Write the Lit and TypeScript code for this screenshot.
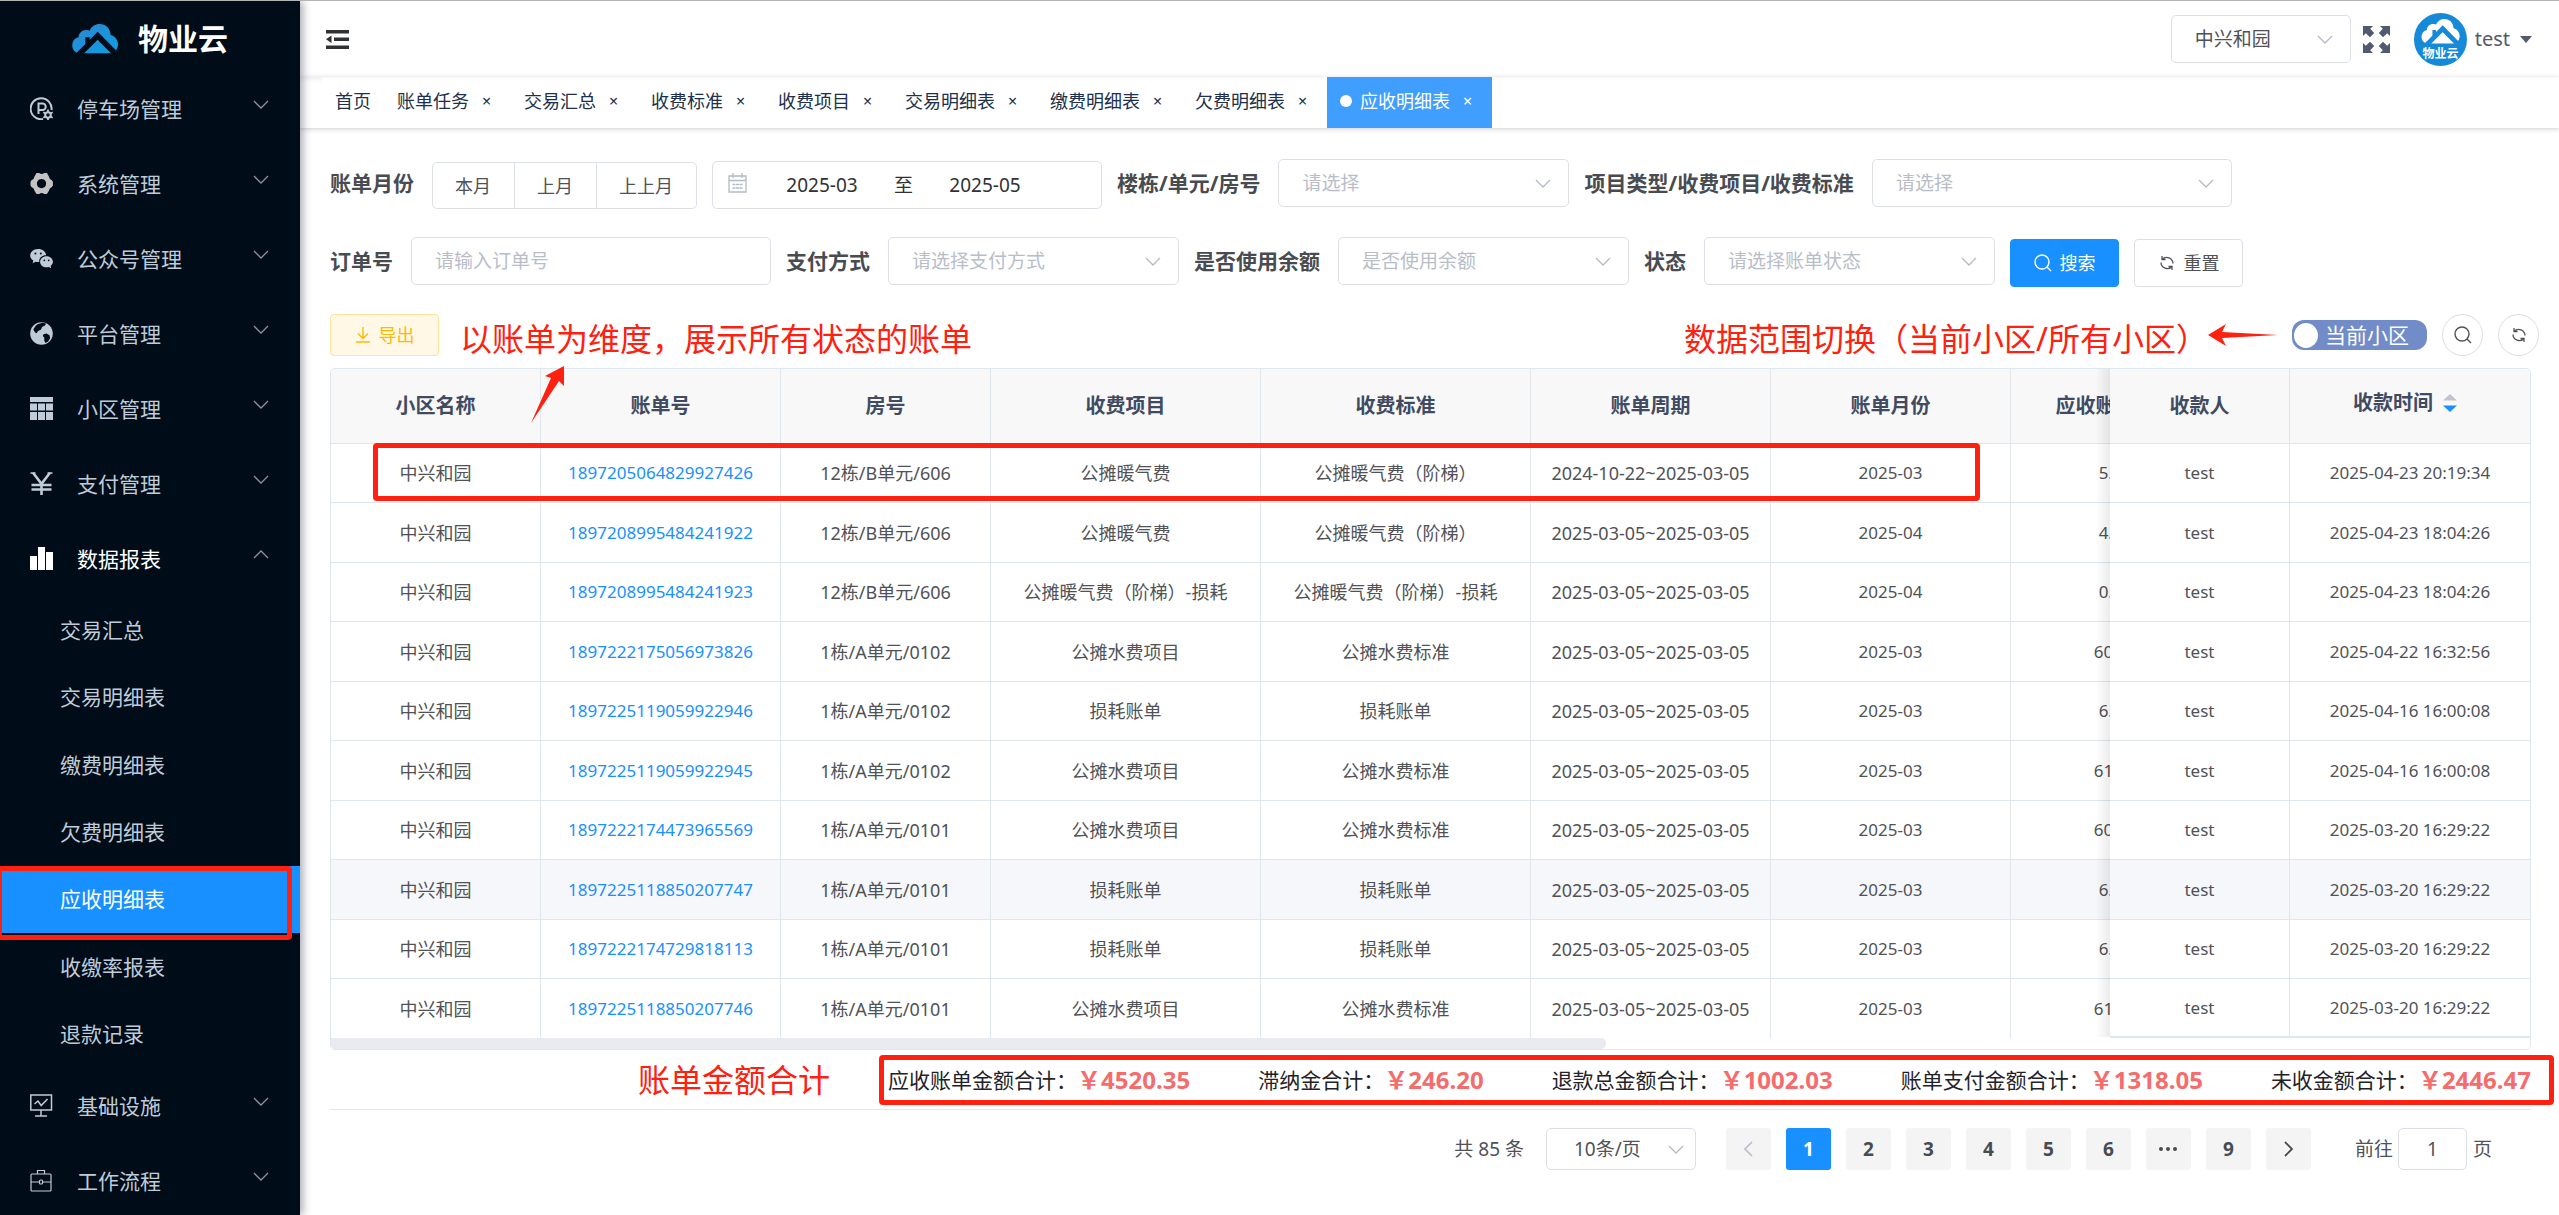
import { LitElement, html, css, svg, nothing } from "lit";
import { customElement } from "lit/decorators.js";
import { classMap } from "lit/directives/class-map.js";

const chevron = (cls: string) => html`<svg class=${cls} viewBox="0 0 16 9" width="16" height="9" aria-hidden="true"><path d="M1 1l7 7 7-7" fill="none" stroke="currentColor" stroke-width="1.3"/></svg>`;

const searchIcon = html`<svg viewBox="0 0 18 18" width="18" height="18" aria-hidden="true"><circle cx="8" cy="8" r="7" fill="none" stroke="currentColor" stroke-width="1.4"/><path d="M13 13l4 4" stroke="currentColor" stroke-width="1.4"/></svg>`;

const refreshIcon = html`<svg viewBox="0 0 18 18" width="18" height="18" aria-hidden="true"><g fill="none" stroke="currentColor" stroke-width="1.3"><path d="M4 2v3.500h3.500M4.200 5.300a6.300 6.300 0 0 1 10.800 4.200"/><path d="M14 16v-3.500h-3.500M13.800 12.700a6.300 6.300 0 0 1-10.800-4.200"/></g></svg>`;

const cloudShape = (fill: string, gap: string) => svg`
  <path fill=${fill} d="M18 88C4 82 0 72 1 62 2 49 10 42 20 40 19 27 31 17 44 18 48 18 51 19 53 20 58 7 70 0 83 0c19 0 32 14 33 33 13 3 22 15 22 28 0 13-8 23-20 27z"/>
  <path fill="none" stroke=${gap} stroke-width="17" d="M14 98L77 35l62 63"/>
  <path fill=${gap} d="M40 40h13v16l-13 14z"/>`;

const icons: Record<string, unknown> = {
  parking: svg`<g fill="none" stroke="currentColor" stroke-width="2"><path d="M13 22A10.500 10.500 0 1 1 21.500 13"/><path d="M8.500 17V6.500h4a3.200 3.200 0 0 1 0 6.500h-4"/><circle cx="18" cy="18" r="2.800"/></g><path d="M18 12.500v3M18 20.500v3M13.300 15.200l2.600 1.500M20.100 19.300l2.600 1.500M13.300 20.800l2.600-1.500M20.100 16.700l2.600-1.500" stroke="currentColor" stroke-width="1.800"/>`,
  gear: svg`<path fill="#c3c3c3" fill-rule="evenodd" d="M6.500 1h2.700q2.500 2 5 0h2.700l2 3.500q.3 2.700 3 3.700l1 1.500v3.800l-1 1.500q-2.700 1-3 3.700l-2 3.300h-2.700q-2.500-2-5 0H6.500l-2-3.300q-.3-2.700-3-3.700l-1-1.500V9.700l1-1.500q2.700-1 3-3.700zM11.500 7a4.600 4.600 0 1 0 .01 0z"/>`,
  wechat: svg`<path fill="currentColor" d="M8 2c4.600 0 7.800 2.700 8.200 6.200C12 8 8.700 11 9.300 15c-1.300.2-2.600 0-3.800-.3L2.600 16.300l.7-2.700C1.300 12.400.2 10.600.2 8.600.2 4.900 3.600 2 8 2z"/><path fill="currentColor" d="M16.500 9.300c3.700 0 6.400 2.500 6.400 5.500 0 1.700-.9 3.200-2.300 4.200l.5 2.200-2.300-1.300c-4.500 1.200-8.700-1.300-8.700-5 0-3.100 2.800-5.600 6.400-5.600z"/><g fill="#000c17"><circle cx="5.400" cy="6.500" r="1"/><circle cx="10.800" cy="6.500" r="1"/><circle cx="14.300" cy="13.300" r=".9"/><circle cx="18.700" cy="13.300" r=".9"/></g>`,
  globe: svg`<circle cx="11.500" cy="11.500" r="11.300" fill="currentColor"/><path fill="#000c17" d="M7.500 2.200l5-1.400 3.500.7-1 2-2.700 1.300-1.500 3L8 9 6.800 11.300 5 10.500 3.300 7.500 5.500 4zM13.500 12.300l3-.8 3 1.700.7 2.800-2 3.500-2.700 1.500-1.300-2.500.2-2.700-1.600-1.800z"/>`,
  grid: svg`<path fill="currentColor" d="M0 0h23v5H0zM0 6.500h7v7H0zM8 6.500h7v7H8zM16 6.500h7v7h-7zM0 15h7v8H0zM8 15h7v8H8zM16 15h7v8h-7z"/>`,
  yen: svg`<path fill="none" stroke="currentColor" stroke-width="2.600" d="M3 .8l8.500 11L20 .8M11.500 11.500V23M1.500 13h20M1.500 17.500h20"/><path stroke="currentColor" stroke-width="1.500" d="M.5 1h5M17.500 1h5"/>`,
  bars: svg`<path fill="currentColor" d="M0 9h7v14H0zM8 0h7v23H8zM16 5h7v18h-7z"/>`,
  board: svg`<path fill="none" stroke="currentColor" stroke-width="1.500" d="M.8 1h20.700v15H.8zM11 16v6M5 22h12M4.500 10l3.500-3 3.200 4.500L17.500 5"/>`,
  briefcase: svg`<g fill="none" stroke="currentColor" stroke-width="1.200"><rect x="1" y="5" width="20" height="17" rx="1"/><path d="M7.500 5V1.500h7V5M1 13h8.500M12.500 13H21"/><rect x="9.500" y="11" width="3" height="4" rx="1"/></g>`,
};

interface MenuItem { label: string; icon: string; children?: string[] }
const menu: MenuItem[] = [
  { label: "停车场管理", icon: "parking" },
  { label: "系统管理", icon: "gear" },
  { label: "公众号管理", icon: "wechat" },
  { label: "平台管理", icon: "globe" },
  { label: "小区管理", icon: "grid" },
  { label: "支付管理", icon: "yen" },
  { label: "数据报表", icon: "bars", children: ["交易汇总", "交易明细表", "缴费明细表", "欠费明细表", "应收明细表", "收缴率报表", "退款记录"] },
  { label: "基础设施", icon: "board" },
  { label: "工作流程", icon: "briefcase" },
];
const currentPage = "应收明细表";
const tabs = ["首页", "账单任务", "交易汇总", "收费标准", "收费项目", "交易明细表", "缴费明细表", "欠费明细表", "应收明细表"];

const columns: [string, string][] = [
  ["小区名称", "w210"], ["账单号", "w240"], ["房号", "w210"], ["收费项目", "w270"], ["收费标准", "w270"],
  ["账单周期", "w240"], ["账单月份", "w240"], ["应收账单金额", "w210"],
];
const usual = "2025-03-05~2025-03-05";
const rows: string[][] = [
  ["1897205064829927426", "12栋/B单元/606", "公摊暖气费", "公摊暖气费（阶梯）", "2024-10-22~2025-03-05", "2025-03", "5.00", "2025-04-23 20:19:34"],
  ["1897208995484241922", "12栋/B单元/606", "公摊暖气费", "公摊暖气费（阶梯）", usual, "2025-04", "4.00", "2025-04-23 18:04:26"],
  ["1897208995484241923", "12栋/B单元/606", "公摊暖气费（阶梯）-损耗", "公摊暖气费（阶梯）-损耗", usual, "2025-04", "0.00", "2025-04-23 18:04:26"],
  ["1897222175056973826", "1栋/A单元/0102", "公摊水费项目", "公摊水费标准", usual, "2025-03", "60.00", "2025-04-22 16:32:56"],
  ["1897225119059922946", "1栋/A单元/0102", "损耗账单", "损耗账单", usual, "2025-03", "6.00", "2025-04-16 16:00:08"],
  ["1897225119059922945", "1栋/A单元/0102", "公摊水费项目", "公摊水费标准", usual, "2025-03", "61.00", "2025-04-16 16:00:08"],
  ["1897222174473965569", "1栋/A单元/0101", "公摊水费项目", "公摊水费标准", usual, "2025-03", "60.00", "2025-03-20 16:29:22"],
  ["1897225118850207747", "1栋/A单元/0101", "损耗账单", "损耗账单", usual, "2025-03", "6.00", "2025-03-20 16:29:22"],
  ["1897222174729818113", "1栋/A单元/0101", "损耗账单", "损耗账单", usual, "2025-03", "6.00", "2025-03-20 16:29:22"],
  ["1897225118850207746", "1栋/A单元/0101", "公摊水费项目", "公摊水费标准", usual, "2025-03", "61.00", "2025-03-20 16:29:22"],
];
const hoveredRow = 7;

const totals: [string, string][] = [
  ["应收账单金额合计：", "4520.35"], ["滞纳金合计：", "246.20"], ["退款总金额合计：", "1002.03"],
  ["账单支付金额合计：", "1318.05"], ["未收金额合计：", "2446.47"],
];

@customElement("app-root")
export class AppRoot extends LitElement {
  static styles = css`
    :host {
      display: grid;
      grid-template-columns: 300px minmax(0, 1fr);
      min-height: 100vh;
      box-sizing: border-box;
      border-top: 1px solid #b3b3b3;
      background: #fff;
      color: #303133;
      font-family: "Noto Sans", "Noto Sans CJK SC", sans-serif;
      font-size: 18px;
      line-height: 24px;
      overflow: hidden;
    }
    * { box-sizing: border-box; }
    button, input, select { font: inherit; color: inherit; margin: 0; }
    button { cursor: pointer; }
    a { color: inherit; text-decoration: none; }
    svg { display: block; flex: none; }
    input, select { outline: none; }

    .sidebar {
      position: relative;
      z-index: 3;
      height: calc(100vh - 1px);
      background: #000c17;
      color: #bfcbd9;
      box-shadow: 3px 0 8px rgba(0, 21, 41, 0.35);
    }
    .brand { display: flex; align-items: center; justify-content: center; gap: 20px; height: 70px; padding-top: 6px; color: #fff; font-size: 30px; font-weight: 700; line-height: 40px; }
    .menu { list-style: none; margin: 0; padding: 0; font-size: 21px; line-height: 28px; }
    .entry { display: flex; align-items: center; gap: 24px; width: 100%; height: 75px; padding: 0 31px 0 30px; border: 0; background: none; text-align: left; }
    .entry .caret { margin: 0 0 8px auto; color: #8a93a0; }
    .entry.open { color: #fff; }
    .entry.open .caret { transform: rotate(180deg); }
    .submenu { display: grid; grid-auto-rows: 1fr; height: 472px; list-style: none; margin: 0; padding: 0; }
    .submenu li { position: relative; display: grid; }
    .submenu a { display: flex; align-items: center; padding-left: 60px; }
    .submenu a.active { background: #1890ff; color: #fff; }
    .mark { position: absolute; border: 5px solid #ff2010; border-radius: 4px; pointer-events: none; }
    .mark-menu { inset: 0 8px -7px -3px; }

    .main { min-width: 0; }
    .topbar { display: flex; align-items: center; height: 76px; padding: 0 27px 0 26px; box-shadow: 0 1px 6px rgba(0, 21, 41, 0.1); }
    .topbar .fold { border: 0; background: none; padding: 0; margin-right: auto; color: #303133; }
    .community { width: 180px; margin-right: 12px; }
    .plain { border: 0; background: none; padding: 0; }
    .user { display: flex; align-items: center; gap: 8px; margin-left: 24px; font-size: 20px; color: #515a6e; }
    .user .drop { margin-left: 2px; }
    .avatar-text { font-size: 12px; font-weight: 700; fill: #fff; }

    .tabs { position: relative; display: flex; height: 51px; margin-left: 22px; background: #fff; }
    .tabstrip { box-shadow: 0 1px 5px rgba(0, 0, 0, 0.2); }
    .tabstrip .tabs { box-shadow: inset 0 4px 4px -4px rgba(0, 0, 0, 0.06); }
    .tab { display: flex; align-items: center; padding: 0 13px 3px; color: #20304c; }
    .tab .dot { width: 12px; height: 12px; border-radius: 50%; background: #fff; margin-right: 8px; }
    .tab .close { width: 23px; margin-left: 6px; padding: 0; border: 0; background: none; font-size: 16px; line-height: 24px; }
    .tab.active { background: #409eff; color: #fff; }

    .content { padding: 31px 28px 0 30px; }
    .filters { display: flex; flex-wrap: wrap; gap: 0 15px; min-height: 50px; margin-bottom: 28px; }
    .field { display: flex; gap: 18px; }
    .field > label, .field > .name { font-size: 21px; font-weight: 700; line-height: 48px; color: #484b50; white-space: nowrap; }
    .box { display: block; width: 100%; height: 48px; padding: 0 23px; border: 1px solid #dcdfe6; border-radius: 5px; background: #fff; font-size: 19px; color: #505256; appearance: none; }
    .box.empty { color: #b8bdc7; }
    .box::placeholder { color: #b8bdc7; opacity: 1; }
    .pick { position: relative; height: 48px; }
    .pick .caret { position: absolute; right: 18px; top: 20px; color: #b4bac4; pointer-events: none; }
    .w291 { width: 291px; }
    .w360 { width: 360px; }
    .end { align-self: flex-end; }
    .months { display: flex; height: 47px; }
    .months button { padding: 0 23px 0 22px; border: 1px solid #dcdfe6; margin-left: -1px; background: #fff; color: #505256; white-space: nowrap; }
    .months button:first-child { border-radius: 5px 0 0 5px; margin-left: 0; }
    .months button:last-child { border-radius: 0 5px 5px 0; }
    .range { display: flex; align-items: center; width: 390px; height: 48px; padding: 0 15px; border: 1px solid #dcdfe6; border-radius: 5px; font-size: 19px; color: #303133; }
    .range svg { color: #b4bac4; margin: 0 3px 4px 0; }
    .range input { width: 144px; border: 0; padding: 0; text-align: center; background: none; }
    .buttons { display: flex; gap: 15px; align-self: flex-end; }
    .btn { display: flex; align-items: center; justify-content: center; gap: 8px; width: 109px; height: 48px; padding: 0; border: 1px solid #dcdfe6; border-radius: 4px; background: #fff; color: #505256; }
    .btn.primary { background: #1890ff; border-color: #1890ff; color: #fff; }
    .btn.warn { height: 42px; background: #fff8e6; border-color: #ffe399; color: #ffba00; }

    .tools { position: relative; z-index: 2; display: flex; align-items: center; height: 42px; margin: -1px -8px 12px 0; }
    .note { margin: 0; font-size: 32px; line-height: 42px; color: #ff2010; white-space: nowrap; }
    .tools .note { margin-left: 21px; padding-top: 8px; }
    .tools .scope { margin-left: auto; }
    .note-arrow { position: absolute; left: 200px; top: 50px; }
    .switch { position: relative; display: flex; align-items: center; height: 30px; margin: 0 15px 0 14px; padding: 0 18px 0 2px; gap: 7px; border-radius: 12px; background: #728bc9; color: #fff; font-size: 21px; line-height: 30px; }
    .switch input { appearance: none; width: 24px; height: 25px; margin: 0; border-radius: 50%; background: #fff; }
    .round { display: grid; place-items: center; width: 41px; height: 42px; padding: 0; margin-left: 15px; border: 1px solid #dcdfe6; border-radius: 50%; background: #fff; color: #505256; }
    .switch + .round { margin-left: 0; }

    .tablebox { position: relative; }
    .viewport { overflow: hidden; border: 1px solid #dfe6ec; border-radius: 5px; }
    table { width: 100%; min-width: 2310px; table-layout: fixed; border-collapse: separate; border-spacing: 0; color: #505256; }
    th, td { height: 60px; padding: 0; border: solid #dfe6ec; border-width: 0 1px 1px 0; background: #fff; text-align: center; white-space: nowrap; }
    tbody tr:nth-child(odd) td { height: 59px; }
    tbody tr:last-child td { height: 59px; border-bottom: 0; }
    tr.hover td { background: #f5f7fa; }
    th { height: 75px; background: #f8f8f9; color: #404b62; font-size: 20px; font-weight: 700; }
    td.num { font-size: 17px; }
    td a { color: #1890ff; }
    .w179 { width: 180px; }
    .w210 { width: 210px; }
    .w240 { width: 240px; }
    .w270 { width: 270px; }
    .payee, .paid { position: sticky; z-index: 1; }
    .payee { right: 240px; }
    .paid { right: 0; border-right: 0; }
    .payee::before { content: ""; position: absolute; top: 0; bottom: -1px; left: -14px; width: 14px; background: linear-gradient(to left, rgba(0, 0, 0, 0.08), rgba(0, 0, 0, 0)); }
    tbody tr:last-child .payee, tbody tr:last-child .paid { border-bottom: 2px solid #dfe6ec; }
    .sorted { display: flex; align-items: center; justify-content: center; gap: 10px; padding: 0 10px 6px 0; }
    .track { height: 11px; background: #fff; }
    .thumb { width: 58%; height: 11px; background: #e9ebf0; border-radius: 0 5px 5px 0; }
    .mark-row { top: 75px; left: 43px; width: 1607px; height: 58px; }

    .summary { position: relative; display: flex; align-items: center; justify-content: flex-end; height: 60px; border-bottom: 1px solid #e4e7ed; font-size: 21px; color: #1f2329; white-space: nowrap; }
    .summary .note { margin-right: 58px; }
    .totals { display: flex; gap: 68px; margin: 0; }
    .totals div { display: flex; align-items: center; }
    .totals dd { margin: 0; font-size: 24px; font-weight: 700; color: #f56c6c; }
    .mark-sum { inset: 5px -23px 4px -9px; }
    .sumwrap { position: relative; display: flex; align-items: center; align-self: stretch; }

    .pager { display: flex; align-items: center; justify-content: flex-end; height: 42px; margin: 18px 39px 0 0; font-size: 19px; color: #505256; }
    .pager .size { width: 150px; margin: 0 30px 0 22px; }
    .pager .box { height: 42px; }
    .pager .size .box { padding: 0 27px; }
    .pager .pick { height: 42px; }
    .pager .pick .caret { right: 12px; top: 17px; }
    .pages { display: flex; gap: 15px; margin-right: 44px; }
    .page { display: grid; place-items: center; width: 45px; height: 42px; padding: 0; border: 0; border-radius: 3px; background: #f4f4f5; font-weight: 700; color: #484b50; }
    .page.on { background: #1890ff; color: #fff; }
    .page:disabled { color: #b8bdc7; }
    .pager .jump { width: 69px; margin: 0 6px 0 5px; padding: 0; text-align: center; }
  `;

  private select(id: string, text: string, cls: string, empty = true) {
    return html`<div class="pick ${cls}">
      <select id=${id} class=${classMap({ box: true, empty })} aria-label=${text}><option>${text}</option></select>
      ${chevron("caret")}
    </div>`;
  }

  private sidebar() {
    return html`<nav class="sidebar">
      <div class="brand">
        <svg viewBox="0 0 138 90" width="46" height="30" aria-hidden="true">
          <defs><linearGradient id="sky" x1="0" y1="0" x2="1" y2="1"><stop offset="0" stop-color="#2f86cf"/><stop offset="1" stop-color="#0a9fe6"/></linearGradient></defs>
          ${cloudShape("url(#sky)", "#000c17")}
        </svg>
        <span>物业云</span>
      </div>
      <ul class="menu">
        ${menu.map((m) => html`<li>
          <button class=${classMap({ entry: true, open: !!m.children })}>
            <svg viewBox="0 0 23 23" width="23" height="23" aria-hidden="true">${icons[m.icon]}</svg>
            <span>${m.label}</span>${chevron("caret")}
          </button>
          ${m.children ? html`<ul class="submenu">${m.children.map((c) => html`<li>
            <a href="#" class=${classMap({ active: c === currentPage })}>${c}</a>
            ${c === currentPage ? html`<span class="mark mark-menu"></span>` : nothing}
          </li>`)}</ul>` : nothing}
        </li>`)}
      </ul>
    </nav>`;
  }

  private topbar() {
    return html`<header class="topbar">
      <button class="fold" aria-label="折叠菜单">
        <svg viewBox="0 0 23 19" width="23" height="19"><path fill="currentColor" d="M0 0h23v3.500H0zM8 7.500h15V11H8zM0 15.500h23V19H0zM0 9.300L5.500 5.500v7.600z"/></svg>
      </button>
      ${this.select("community", "中兴和园", "community", false)}
      <button class="plain" aria-label="全屏">
        <svg viewBox="0 0 27 27" width="27" height="27"><g fill="#515a6e">
          <path d="M0 0h10L7.200 2.800l4 4.200L7 11.200 2.800 7.200 0 10z"/>
          <path d="M27 0v10l-2.800-2.800-4.200 4L15.800 7l4-4.200L17 0z"/>
          <path d="M0 27V17l2.800 2.800 4.200-4L11.200 20l-4 4.200L10 27z"/>
          <path d="M27 27H17l2.800-2.800-4-4.200 4.200-4.200 4.200 4L27 17z"/>
        </g></svg>
      </button>
      <button class="plain user">
        <svg viewBox="0 0 53 53" width="53" height="53" aria-hidden="true">
          <circle cx="26.500" cy="26.500" r="26.500" fill="#148ad8"/>
          <svg x="7" y="6" width="39" height="25" viewBox="0 0 138 90">${cloudShape("#fff", "#148ad8")}</svg>
          <text class="avatar-text" x="26.500" y="45" text-anchor="middle">物业云</text>
        </svg>
        <span>test</span>
        <svg class="drop" viewBox="0 0 12 7" width="12" height="7" aria-hidden="true"><path fill="#515a6e" d="M0 0h12L6 7z"/></svg>
      </button>
    </header>`;
  }

  private filters() {
    return html`<form class="filters">
        <div class="field"><span class="name">账单月份</span>
          <div class="months end"><button type="button">本月</button><button type="button">上月</button><button type="button">上上月</button></div>
        </div>
        <div class="range end">
          <svg viewBox="0 0 19 20" width="19" height="20" aria-hidden="true"><path fill="none" stroke="currentColor" stroke-width="1.300" d="M1 3h17v16H1zM1 7.500h17M5 0v5M14 0v5M4.500 11.500h3M8 11.500h3M11.500 11.500h3M4.500 15h3M8 15h3M11.500 15h3"/></svg>
          <input aria-label="开始月份" .value=${"2025-03"}><span>至</span><input aria-label="结束月份" .value=${"2025-05"}>
        </div>
        <div class="field"><label for="house">楼栋/单元/房号</label>${this.select("house", "请选择", "w291")}</div>
        <div class="field"><label for="item">项目类型/收费项目/收费标准</label>${this.select("item", "请选择", "w360")}</div>
      </form>
      <form class="filters">
        <div class="field"><label for="order">订单号</label><input id="order" class="box w360" placeholder="请输入订单号"></div>
        <div class="field"><label for="pay">支付方式</label>${this.select("pay", "请选择支付方式", "w291")}</div>
        <div class="field"><label for="balance">是否使用余额</label>${this.select("balance", "是否使用余额", "w291")}</div>
        <div class="field"><label for="status">状态</label>${this.select("status", "请选择账单状态", "w291")}</div>
        <div class="buttons">
          <button type="button" class="btn primary">${searchIcon}搜索</button>
          <button type="button" class="btn">${refreshIcon}重置</button>
        </div>
      </form>`;
  }

  private tools() {
    return html`<div class="tools">
      <button class="btn warn">
        <svg viewBox="0 0 16 16" width="16" height="16" aria-hidden="true"><path fill="none" stroke="currentColor" stroke-width="1.400" d="M8 0v11M3 6.500l5 5 5-5M1 15h14"/></svg>导出
      </button>
      <p class="note">以账单为维度，展示所有状态的账单</p>
      <svg class="note-arrow" viewBox="0 0 36 60" width="36" height="60" aria-hidden="true"><path fill="#ff2010" d="M34 2v20l-5-5L1 59l20-45-6-2z"/></svg>
      <p class="note scope">数据范围切换（当前小区/所有小区）</p>
      <svg viewBox="0 0 70 22" width="70" height="22" aria-hidden="true"><path fill="#ff2010" d="M0 11L18 0l-4 8 56 3-56 3 4 8z"/></svg>
      <label class="switch"><input type="checkbox" role="switch">当前小区</label>
      <button class="round" aria-label="显示搜索">${searchIcon}</button>
      <button class="round" aria-label="刷新">${refreshIcon}</button>
    </div>`;
  }

  private table() {
    return html`<div class="tablebox">
      <div class="viewport">
        <table>
          <thead><tr>
            ${columns.map(([name, w]) => html`<th class=${w}>${name}</th>`)}
            <th class="w179 payee">收款人</th>
            <th class="w240 paid"><span class="sorted">收款时间
              <svg viewBox="0 0 14 18" width="14" height="18" aria-hidden="true"><path fill="#c0c4cc" d="M7 0l7 6.500H0z"/><path fill="#1890ff" d="M0 11.500h14L7 18z"/></svg>
            </span></th>
          </tr></thead>
          <tbody>
            ${rows.map((r, i) => html`<tr class=${classMap({ hover: i === hoveredRow })}>
              <td>中兴和园</td>
              <td class="num"><a href="#">${r[0]}</a></td>
              <td>${r[1]}</td><td>${r[2]}</td><td>${r[3]}</td>
              <td>${r[4]}</td><td class="num">${r[5]}</td><td class="num">${r[6]}</td>
              <td class="num payee">test</td><td class="num paid">${r[7]}</td>
            </tr>`)}
          </tbody>
        </table>
        <div class="track"><div class="thumb"></div></div>
      </div>
      <span class="mark mark-row"></span>
    </div>`;
  }

  private footer() {
    return html`<div class="summary">
        <p class="note">账单金额合计</p>
        <div class="sumwrap">
          <dl class="totals">${totals.map(([k, v]) => html`<div><dt>${k}</dt><dd>￥${v}</dd></div>`)}</dl>
          <span class="mark mark-sum"></span>
        </div>
      </div>
      <nav class="pager">
        <span>共 85 条</span>
        ${this.select("size", "10条/页", "size", false)}
        <div class="pages">
          <button class="page" disabled aria-label="上一页"><svg viewBox="0 0 9 16" width="9" height="16"><path d="M8 1L1 8l7 7" fill="none" stroke="currentColor" stroke-width="1.600"/></svg></button>
          ${["1", "2", "3", "4", "5", "6", "•••", "9"].map((p) => p === "•••"
            ? html`<button class="page" aria-label="更多页"><svg viewBox="0 0 18 4" width="18" height="4"><g fill="currentColor"><circle cx="2" cy="2" r="2"/><circle cx="9" cy="2" r="2"/><circle cx="16" cy="2" r="2"/></g></svg></button>`
            : html`<button class=${classMap({ page: true, on: p === "1" })}>${p}</button>`)}
          <button class="page" aria-label="下一页"><svg viewBox="0 0 9 16" width="9" height="16"><path d="M1 1l7 7-7 7" fill="none" stroke="currentColor" stroke-width="1.800"/></svg></button>
        </div>
        <label for="jump">前往</label><input id="jump" class="box jump" .value=${"1"}><span>页</span>
      </nav>`;
  }

  render() {
    return html`${this.sidebar()}
      <div class="main">
        ${this.topbar()}
        <div class="tabstrip"><div class="tabs">
          ${tabs.map((t, i) => html`<div class=${classMap({ tab: true, active: t === currentPage })}>
            ${t === currentPage ? html`<span class="dot"></span>` : nothing}
            <a href="#">${t}</a>
            ${i ? html`<button class="close" aria-label="关闭${t}">×</button>` : nothing}
          </div>`)}
        </div></div>
        <main class="content">
          ${this.filters()}${this.tools()}${this.table()}${this.footer()}
        </main>
      </div>`;
  }
}
